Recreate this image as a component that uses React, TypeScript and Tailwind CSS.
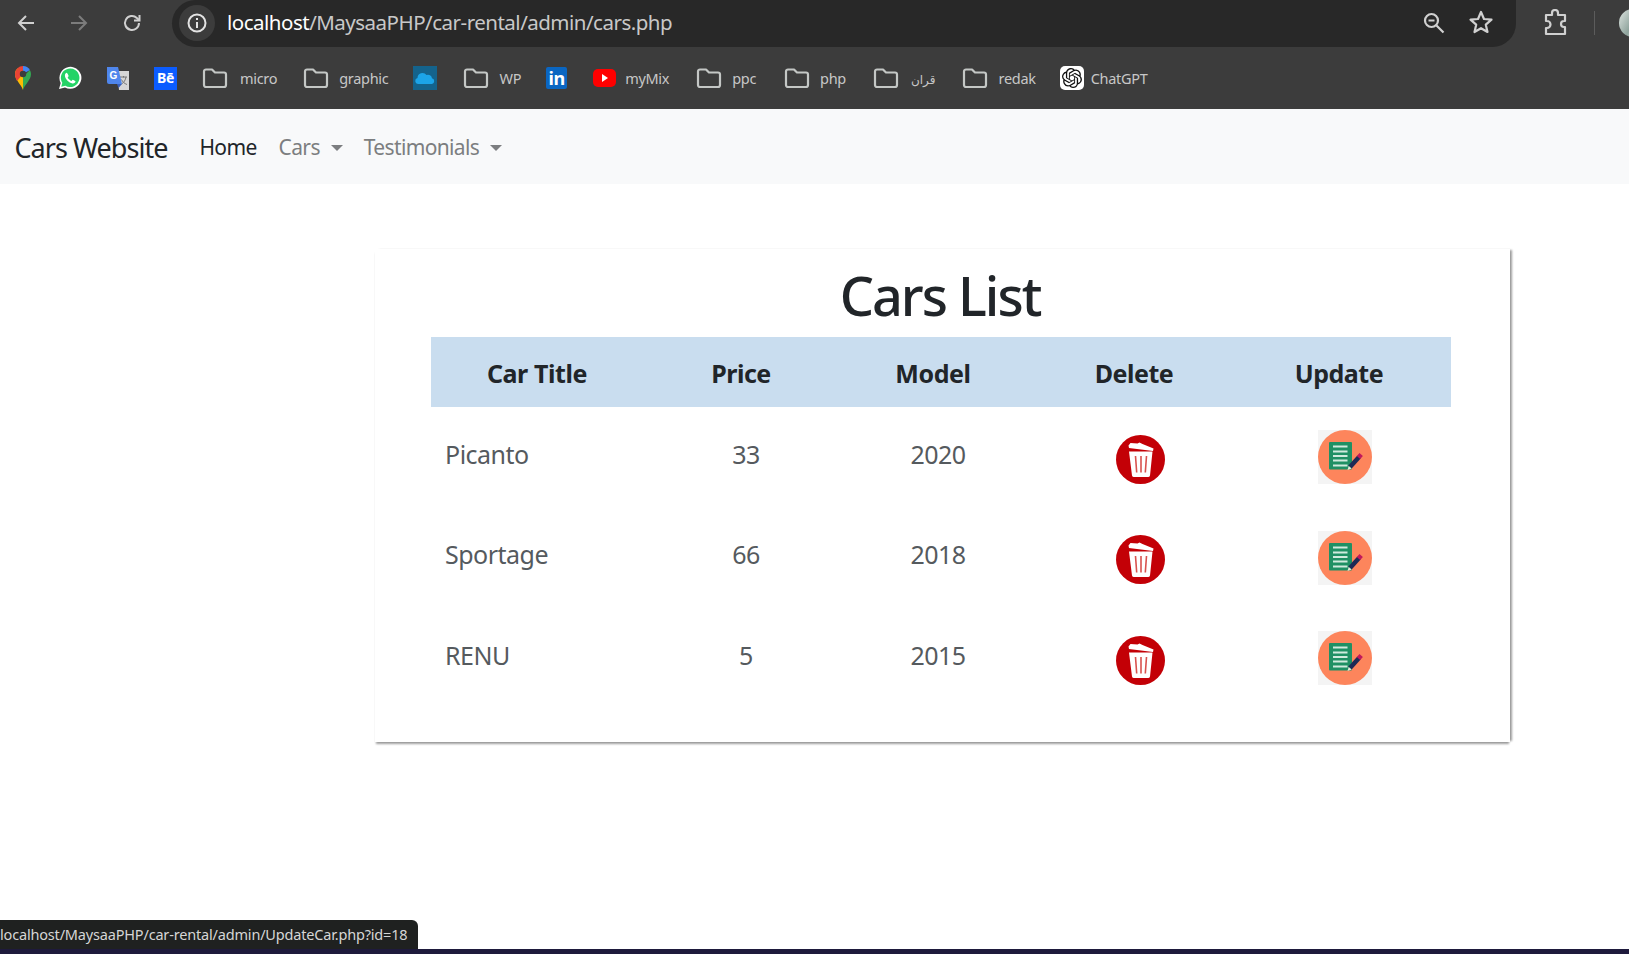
import React from "react";

const ui = "font-['Noto_Sans','Open_Sans',sans-serif]";

function Folder() {
  return (
    <svg width="26" height="22" viewBox="0 0 26 22" fill="none" stroke="#c4c7c5" strokeWidth="2.2" strokeLinejoin="round">
      <path d="M2 4.5a2 2 0 0 1 2-2h6l3 3h9a2 2 0 0 1 2 2v10.5a2 2 0 0 1-2 2H4a2 2 0 0 1-2-2z" />
    </svg>
  );
}

function FolderLink({ label, gap, mr }: { label: React.ReactNode; gap: string; mr: string }) {
  return (
    <div className={`flex items-center ${gap} ${mr}`}>
      <Folder />
      <span className="text-[14.5px] leading-none tracking-[-0.3px] text-[#c7c7c7]">{label}</span>
    </div>
  );
}

function Trash() {
  return (
    <svg width="49" height="49" viewBox="0 0 49 49" className="blur-[0.3px]">
      <circle cx="24.5" cy="24.5" r="24.5" fill="#c30006" />
      <path d="M12.5 10.500l2-2.500 7 .5 2-1 3 1.500 11 4.500-.5 2.500-24-3z" fill="#fff" />
      <path d="M13 16.500h23.500l-2.500 24a2 2 0 0 1-2 1.500H18a2 2 0 0 1-2-1.500z" fill="#fff" />
      <path d="M19.500 21l1.200 16.500M25 21v16.500M30.500 21l-1.200 16.500" stroke="#d9534f" strokeWidth="1.600" />
    </svg>
  );
}

function Edit() {
  return (
    <svg width="54" height="54" viewBox="0 0 54 54" className="blur-[0.3px]">
      <rect width="54" height="54" fill="#f4f4f4" />
      <circle cx="27" cy="27" r="27" fill="#fd855c" />
      <rect x="11" y="12" width="23" height="27.500" rx="1" fill="#1f9064" />
      <path d="M15 16.500h14.500M15 21.500h14.500M15 26h14.500M15 30.500h14.500M15 35.500h14.500" stroke="#cfeadd" strokeWidth="1.900" />
      <path d="M32 37l9-10" stroke="#1e2a55" strokeWidth="4.500" />
      <path d="M40.500 27.500l2.700-3" stroke="#c2185b" strokeWidth="4.500" />
      <path d="M29.500 40l1.200-4 3 2.500z" fill="#e8e8d8" />
    </svg>
  );
}

function Caret() {
  return <span className="ml-[11px] inline-block h-0 w-0 border-x-[6px] border-t-[6px] border-x-transparent border-t-[#7c7e80]" />;
}

const rows = [
  ["Picanto", "33", "2020"],
  ["Sportage", "66", "2018"],
  ["RENU", "5", "2015"],
];

export default function App() {
  return (
    <div className={`relative flex h-[954px] w-full flex-col overflow-hidden bg-white ${ui}`}>
      {/* Browser chrome */}
      <div className="h-[109px] shrink-0 bg-[#3c3c3c]">
        <div className="flex h-[47px] items-center">
          <div className="flex w-[172px] shrink-0 items-center pb-[2px] pl-[16px]">
            <svg width="20" height="20" viewBox="0 0 20 20" fill="none" stroke="#d0d0d0" strokeWidth="2">
              <path d="M18 10H3M10 3l-7 7 7 7" />
            </svg>
            <svg width="20" height="20" viewBox="0 0 20 20" fill="none" stroke="#7c7c7c" strokeWidth="2" className="ml-[33px]">
              <path d="M2 10h15M10 3l7 7-7 7" />
            </svg>
            <svg width="22" height="22" viewBox="0 0 22 22" fill="none" stroke="#d0d0d0" strokeWidth="2" className="ml-[32px]">
              <path d="M18 11a7 7 0 1 1-2.2-5.1L18 8" />
              <path d="M18.5 3v5.5H13" />
            </svg>
          </div>
          <div className="flex h-[47px] w-[1344px] shrink-0 items-center rounded-br-[24px] rounded-l-[24px] bg-[#282828] pb-[1px] pl-[7px]">
            <div className="flex h-[36px] w-[36px] items-center justify-center rounded-full bg-[#3c3c3c]">
              <svg width="20" height="20" viewBox="0 0 20 20" fill="none" stroke="#e3e3e3" strokeWidth="2">
                <circle cx="10" cy="10" r="8.5" />
                <path d="M10 9v6M10 5v2" />
              </svg>
            </div>
            <span className="mb-[2px] ml-[12px] text-[20.5px] leading-none tracking-[-0.5px] text-[#c8c8c8]">
              <span className="text-white">localhost</span>/MaysaaPHP/car-rental/admin/cars.php
            </span>
            <svg width="24" height="24" viewBox="0 0 24 24" fill="none" stroke="#d0d0d0" strokeWidth="2.2" className="mb-[1px] ml-auto">
              <circle cx="9.5" cy="9.5" r="6.5" />
              <path d="M6.5 9.5h6M14.5 14.5l7 7" />
            </svg>
            <svg width="26" height="26" viewBox="0 0 26 26" fill="none" stroke="#d0d0d0" strokeWidth="2.2" strokeLinejoin="round" className="mb-[2px] ml-[22px] mr-[22px]">
              <path d="M13 3l3 7 7.5.7-5.7 5 1.7 7.3-6.5-3.8L6.5 23l1.7-7.3-5.7-5L10 10z" />
            </svg>
          </div>
          <svg width="26" height="28" viewBox="0 0 26 28" fill="none" stroke="#d0d0d0" strokeWidth="2.2" strokeLinejoin="round" className="mb-[2px] ml-[27px] shrink-0">
            <path d="M3 6h6V4a3 3 0 0 1 6 0v2h7v6h-1a3 3 0 0 0 0 6h1v7H3v-6h1a3.5 3.5 0 0 0 0-7H3z" />
          </svg>
          <div className="mb-[2px] ml-[25px] h-[24px] w-px shrink-0 bg-[#5c5c5c]" />
          <div className="mb-[2px] ml-[24px] h-[28px] w-[28px] shrink-0 rounded-full bg-[linear-gradient(120deg,#dfe6e2,#8ea39c,#f2f2f2)]" />
        </div>
        <div className="flex h-[62px] items-center pl-[14px]">
          {/* maps */}
          <svg width="18" height="26" viewBox="0 0 18 26" className="mr-[26px] shrink-0">
            <path d="M9 25C7 19 1 15 1 9a8 8 0 0 1 2.4-5.7L9 9z" fill="#fbbc04" />
            <path d="M9 25c2-6 8-10 8-16 0-1.500-.4-2.900-1.100-4.100L9 12z" fill="#34a853" />
            <path d="M3.400 3.300A8 8 0 0 1 9 1v8z" fill="#ea4335" />
            <path d="M9 1a8 8 0 0 1 6.900 3.900L9 9z" fill="#4285f4" />
            <path d="M1 9a8 8 0 0 1 2.400-5.700L9 9l-6 7c-1-2-2-4-2-7z" fill="#ea4335" />
            <circle cx="9" cy="9" r="3.200" fill="#3c3c3c" />
          </svg>
          {/* whatsapp */}
          <svg width="24" height="24" viewBox="0 0 24 24" className="mr-[24px] shrink-0">
            <path d="M1 23l1.700-6A11 11 0 1 1 7 21.400z" fill="#fff" />
            <path d="M3.200 20.800l1.100-4A9.300 9.300 0 1 1 7.400 19.800z" fill="#25d366" />
            <path d="M8.600 6.800c-.5 0-1.700 1-1.700 2.700 0 3 3.900 7.400 7.600 8 1.700.2 3-1 3-2.200 0-.4-2.400-1.700-2.800-1.600-.5.200-.9 1.100-1.300 1.200-1 0-3.500-2.300-3.700-3.300 0-.5.900-1 .9-1.500 0-.5-1.200-3.300-2-3.300z" fill="#fff" />
          </svg>
          {/* translate */}
          <svg width="24" height="25" viewBox="0 0 24 25" className="mr-[24px] shrink-0">
            <path d="M11 5h12v19H13z" fill="#d7d7d7" />
            <path d="M14 11h7M17.500 10v1.500M15.500 18c2.500-1.500 4-4 4.500-7M15.500 13.500c1 2.500 3 4 5.500 5" stroke="#777" strokeWidth="1" fill="none" />
            <path d="M1 1h11l4 17H3a2 2 0 0 1-2-2z" fill="#4f86ec" />
            <path d="M11 18h5l-3.500 4z" fill="#3a5fb8" />
            <text x="3.500" y="12.500" fontSize="10" fontWeight="700" fill="#fff" fontFamily="Liberation Sans">G</text>
          </svg>
          {/* behance */}
          <div className="mr-[25px] flex h-[23px] w-[23px] shrink-0 items-center justify-center bg-[#0b5cff] text-[14px] font-bold leading-none tracking-[-0.4px] text-white">Bē</div>
          <FolderLink label="micro" gap="gap-[12px]" mr="mr-[26px]" />
          <FolderLink label="graphic" gap="gap-[10px]" mr="mr-[25px]" />
          {/* onedrive */}
          <div className="mr-[26px] flex h-[24px] w-[24px] shrink-0 items-center justify-center bg-[#14638c]">
            <svg width="20" height="12" viewBox="0 0 20 12">
              <path d="M3 12a3 3 0 0 1-.5-5.900A5 5 0 0 1 11.500 3 4 4 0 0 1 17 6.200 3 3 0 0 1 17 12z" fill="#1ca4e8" />
            </svg>
          </div>
          <FolderLink label="WP" gap="gap-[10px]" mr="mr-[25px]" />
          {/* linkedin */}
          <div className="mr-[26px] flex h-[22px] w-[21px] shrink-0 items-center justify-center rounded-[2px] bg-[#0a66c2] text-[18px] font-bold leading-none tracking-[-0.5px] text-white">in</div>
          {/* youtube */}
          <div className="mr-[9px] flex h-[18px] w-[23px] shrink-0 items-center justify-center rounded-[5px] bg-[#ff0000]">
            <div className="ml-[1px] h-0 w-0 border-y-[4px] border-l-[6px] border-y-transparent border-l-white" />
          </div>
          <span className="mr-[27px] text-[14.5px] leading-none tracking-[-0.3px] text-[#c7c7c7]">myMix</span>
          <FolderLink label="ppc" gap="gap-[10px]" mr="mr-[28px]" />
          <FolderLink label="php" gap="gap-[10px]" mr="mr-[27px]" />
          <FolderLink label={<span className="font-['DejaVu_Sans',sans-serif] text-[12px]">قران</span>} gap="gap-[12px]" mr="mr-[27px]" />
          <FolderLink label="redak" gap="gap-[10px]" mr="mr-[24px]" />
          {/* chatgpt */}
          <div className="mr-[7px] flex h-[24px] w-[24px] shrink-0 items-center justify-center rounded-[5px] bg-white">
            <svg width="20" height="20" viewBox="0 0 24 24" fill="#111">
              <path d="M22.282 9.821a5.985 5.985 0 0 0-.516-4.91 6.046 6.046 0 0 0-6.51-2.900A6.065 6.065 0 0 0 4.981 4.180a5.985 5.985 0 0 0-3.998 2.900 6.046 6.046 0 0 0 .743 7.097 5.980 5.980 0 0 0 .510 4.911 6.051 6.051 0 0 0 6.515 2.900A5.985 5.985 0 0 0 13.260 24a6.056 6.056 0 0 0 5.772-4.206 5.990 5.990 0 0 0 3.997-2.900 6.056 6.056 0 0 0-.747-7.073zM13.260 22.430a4.476 4.476 0 0 1-2.876-1.040l.141-.081 4.779-2.758a.795.795 0 0 0 .392-.681v-6.737l2.020 1.168a.071.071 0 0 1 .038.052v5.583a4.504 4.504 0 0 1-4.494 4.494zM3.600 18.304a4.470 4.470 0 0 1-.535-3.014l.142.085 4.783 2.759a.771.771 0 0 0 .780 0l5.843-3.369v2.332a.080.080 0 0 1-.033.062L9.740 19.950a4.500 4.500 0 0 1-6.140-1.646zM2.340 7.896a4.485 4.485 0 0 1 2.366-1.973V11.600a.766.766 0 0 0 .388.676l5.815 3.355-2.020 1.168a.076.076 0 0 1-.071 0l-4.830-2.786A4.504 4.504 0 0 1 2.340 7.872zm16.597 3.855l-5.833-3.387L15.119 7.200a.076.076 0 0 1 .071 0l4.830 2.791a4.494 4.494 0 0 1-.676 8.105v-5.678a.790.790 0 0 0-.407-.667zm2.010-3.023l-.141-.085-4.774-2.782a.776.776 0 0 0-.785 0L9.409 9.230V6.897a.066.066 0 0 1 .028-.061l4.830-2.787a4.500 4.500 0 0 1 6.680 4.660zm-12.640 4.135l-2.020-1.164a.080.080 0 0 1-.038-.057V6.075a4.500 4.500 0 0 1 7.375-3.453l-.142.080L8.704 5.460a.795.795 0 0 0-.393.681zm1.097-2.365l2.602-1.500 2.607 1.500v2.999l-2.597 1.500-2.607-1.500z" />
            </svg>
          </div>
          <span className="text-[14.5px] leading-none tracking-[-0.3px] text-[#c7c7c7]">ChatGPT</span>
        </div>
      </div>

      {/* Navbar */}
      <nav className="flex h-[75px] shrink-0 items-center bg-[#f8f9fa] pl-[14.500px] pt-[2px] text-[21px] leading-none tracking-[-0.65px]">
        <span className="text-[27px] tracking-[-0.97px] text-[#212529]">Cars Website</span>
        <span className="ml-[32px] text-[#212529]">Home</span>
        <span className="ml-[22px] flex items-center text-[#7c7e80]">Cars<Caret /></span>
        <span className="ml-[21px] flex items-center text-[#7c7e80]">Testimonials<Caret /></span>
      </nav>

      {/* Panel */}
      <main className="ml-[375px] mt-[65px] h-[493px] w-[1135px] shrink-0 bg-white pl-[56px] pt-[17px] shadow-[3px_0_2px_-1px_rgba(0,0,0,0.38),0_3px_2px_-1px_rgba(0,0,0,0.38)]">
        <h1 className="flex h-[71px] w-[1018px] items-center justify-center pb-[14px] text-[54px] font-medium leading-none tracking-[-2px] text-[#212529]">Cars List</h1>
        <table className="w-[1020px] table-fixed border-collapse">
          <colgroup>
            <col className="w-[212px]" />
            <col className="w-[196px]" />
            <col className="w-[188px]" />
            <col className="w-[214px]" />
            <col className="w-[210px]" />
          </colgroup>
          <thead>
            <tr className="h-[70px] bg-[#c9ddef] text-[25px] font-bold text-[#212529]">
              <th className="pt-[4px] tracking-[-0.4px]">Car Title</th>
              <th className="pt-[4px] tracking-[-0.5px]">Price</th>
              <th className="pt-[4px] tracking-[-0.4px]">Model</th>
              <th className="pt-[4px] tracking-[-0.5px]">Delete</th>
              <th className="pr-[14px] pt-[4px] tracking-[-0.5px]">Update</th>
            </tr>
          </thead>
          <tbody>
            {rows.map((r) => (
              <tr key={r[0]} className="h-[100.5px] text-[25px] tracking-[-0.5px] text-[#555a5e]">
                <td className="pb-[6px] pl-[14px]">{r[0]}</td>
                <td className="pb-[6px] pl-[10px] text-center">{r[1]}</td>
                <td className="pb-[6px] pl-[10px] text-center">{r[2]}</td>
                <td className="pl-[12px] pt-[4px] text-center">
                  <div className="flex justify-center"><Trash /></div>
                </td>
                <td className="pr-[2px]">
                  <div className="flex justify-center"><Edit /></div>
                </td>
              </tr>
            ))}
          </tbody>
        </table>
      </main>

      {/* Status bubble over content */}
      <div className="absolute bottom-[5px] left-0 flex h-[29px] w-[418px] items-center rounded-tr-[6px] bg-[#1f2120] text-[14.5px] leading-none tracking-[-0.18px] text-[#d6d6d6]">
        localhost/MaysaaPHP/car-rental/admin/UpdateCar.php?id=18
      </div>
      <div className="absolute bottom-0 left-0 h-[5px] w-full bg-[#1e1a3c]" />
    </div>
  );
}
